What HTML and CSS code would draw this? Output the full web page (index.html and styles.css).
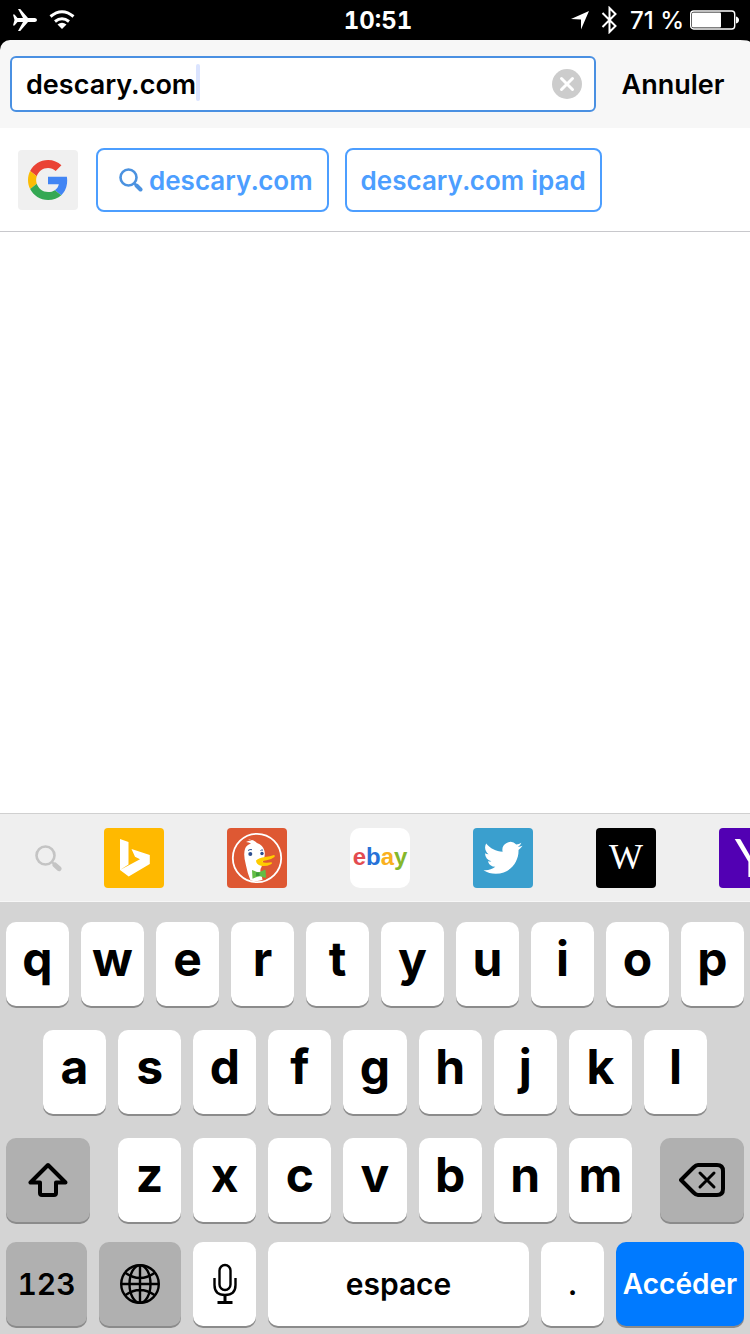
FILE: index.html
```html
<!DOCTYPE html>
<html lang="fr">
<head>
    <meta charset="UTF-8">
    <meta name="viewport" content="width=device-width, initial-scale=1">
    <title>descary.com</title>
    <link rel="stylesheet" href="styles.css">
</head>
<body>
    <div class="status-bar">
        <div class="status-left">
            <svg width="25" height="24" viewBox="0 0 25 24"><path fill="#fff" d="M1 6.500h1.500L5.500 10h5.500L6 1h2.200L16 10h7q2 .500 2 2t-2 2h-7l-7.800 9H6l5-9H5.500l-3 3.500H1L2.500 12z"/></svg>
            <svg width="26" height="20" viewBox="0 0 26 20">
                <path fill="none" stroke="#fff" stroke-width="3" d="M1.500 6.500Q13-3 24.500 6.500M6 11.500q7-5.500 14 0"/>
                <path fill="#fff" d="M8.500 14.500q4.500-3.500 9 0L13 19z"/>
            </svg>
        </div>
        <div class="clock">10:51</div>
        <div class="status-right">
            <svg width="18" height="19" viewBox="0 0 18 19"><path fill="#fff" d="M18 0L10 18.500V8.500L0 8z"/></svg>
            <svg width="17" height="28" viewBox="0 0 17 28"><path fill="none" stroke="#fff" stroke-width="2" d="M1.500 7l13 13L8.500 26V2l6 6-13 13"/></svg>
            <span class="percent">71 %</span>
            <svg width="49" height="20" viewBox="0 0 49 20">
                <rect x="0.700" y="1" width="44" height="18" rx="3" fill="none" stroke="#fff" stroke-width="1.400"/>
                <rect x="2" y="2.500" width="29" height="15" rx="1" fill="#fff"/>
                <path fill="#fff" d="M46 6.500q3 1 3 3.500t-3 3.500z"/>
            </svg>
        </div>
    </div>

    <div class="address-bar">
        <div class="field">
            <input class="address" type="text" value="descary.com" aria-label="Adresse">
            <span class="caret"></span>
            <button class="clear" type="button" aria-label="Effacer">
                <svg width="30" height="30" viewBox="0 0 30 30">
                    <circle cx="15" cy="15" r="15" fill="#ccc"/>
                    <path stroke="#fff" stroke-width="3" stroke-linecap="round" d="M9.500 9.500l11 11M20.500 9.500l-11 11"/>
                </svg>
            </button>
        </div>
        <button class="cancel" type="button">Annuler</button>
    </div>

    <div class="suggestions">
        <svg class="tile google" viewBox="0 0 60 60">
            <g transform="translate(10 10) scale(.834)">
                <path fill="#EA4335" d="M24 9.500c3.540 0 6.710 1.220 9.210 3.600l6.850-6.850C35.900 2.380 30.470 0 24 0 14.620 0 6.510 5.380 2.560 13.220l7.980 6.190C12.430 13.720 17.740 9.500 24 9.500z"/>
                <path fill="#4285F4" d="M46.980 24.550c0-1.570-.15-3.090-.38-4.550H24v9.020h12.940c-.58 2.960-2.260 5.480-4.780 7.180l7.730 6c4.510-4.180 7.090-10.360 7.090-17.650z"/>
                <path fill="#FBBC05" d="M10.530 28.590c-.48-1.450-.76-2.990-.76-4.590s.27-3.140.76-4.590l-7.980-6.190C.92 16.460 0 20.120 0 24c0 3.880.92 7.540 2.560 10.780l7.970-6.190z"/>
                <path fill="#34A853" d="M24 48c6.480 0 11.930-2.130 15.890-5.810l-7.730-6c-2.150 1.450-4.920 2.300-8.160 2.300-6.260 0-11.570-4.220-13.470-9.910l-7.980 6.190C6.510 42.620 14.620 48 24 48z"/>
            </g>
        </svg>
        <button class="chip" type="button">
            <svg class="chip-icon" width="24" height="24" viewBox="0 0 24 24" fill="none" stroke="#4b92e0">
                <circle cx="9.500" cy="9.500" r="8" stroke-width="2.600"/>
                <path stroke-width="2.400" d="M15 15l3 3"/>
                <path stroke-width="4" stroke-linecap="round" d="M17.500 17.500l4 4"/>
            </svg>
            descary.com
        </button>
        <button class="chip" type="button">descary.com ipad</button>
    </div>

    <div class="content"></div>

    <div class="engines">
        <button class="engine-settings" type="button" aria-label="Moteurs de recherche">
            <svg width="27" height="27" viewBox="0 0 27 27" fill="none" stroke="#c4c4c4">
                <circle cx="10.500" cy="10.500" r="9" stroke-width="2.600"/>
                <path stroke-width="2.200" d="M16.500 16.500l3 3"/>
                <path stroke-width="5" stroke-linecap="round" d="M20 20l4 3.700"/>
            </svg>
        </button>
        <button class="engine" type="button" aria-label="Bing">
            <svg class="tile bing" viewBox="0 0 60 60">
                <path fill="#fff" d="M16 11l8.500 3v22.500L16 42zM16 42l20-10.700-5-2.600L27.500 21l18.300 6v9L24.700 48.500z"/>
            </svg>
        </button>
        <button class="engine" type="button" aria-label="DuckDuckGo">
            <svg class="tile duck" viewBox="0 0 60 60">
                <circle cx="30" cy="30" r="24.200" fill="none" stroke="#fff" stroke-width="1.800"/>
                <path fill="#fff" d="M19 14q3-2 6-1.500-2-1-4-.5 5-1 9 3 6 2 7.500 8 1 5-1 8l-2 8q-2 3-.5 6 1 3 1.500 7-6 2-12 .5-3-7-4.500-15-3-11-1-16.500 1-4 6-5.500-2-1.500-5-1.500z"/>
                <circle cx="23.300" cy="26" r="2" fill="#2d4f8e"/>
                <circle cx="35" cy="25.500" r="1.700" fill="#2d4f8e"/>
                <path fill="none" stroke="#2d4f8e" stroke-width="1" d="M21 22.500q2-1.500 4-.8M33.500 22.500q1.500-1 2.500-.3"/>
                <path fill="#fc0" d="M29 32.500q3-3 9-3.500 5-.5 9-2 1.500.7.500 2-3 2.500-8 3.200-3.500.3-4 1.300.5 1.500 4.500 1.300l4.500-.6q1.500.8-.5 2-5 2.600-10 1.600-5-1.500-5-5.300z"/>
                <path fill="#63bd45" d="M25 42l5 2h2.500l6-2.500.5 8.500-6-1.800-2.500.5-5 2z"/>
                <path fill="#3a9b3a" d="M29 44.500h3.500v3.500H29z"/>
            </svg>
        </button>
        <button class="engine" type="button" aria-label="eBay">
            <svg class="tile ebay" viewBox="0 0 60 60">
                <text class="ebay-text" x="30" y="37" text-anchor="middle"><tspan fill="#e34b50">e</tspan><tspan fill="#2672d8">b</tspan><tspan fill="#f9b01e">a</tspan><tspan fill="#85b72b">y</tspan></text>
            </svg>
        </button>
        <button class="engine" type="button" aria-label="Twitter">
            <svg class="tile twitter" viewBox="0 0 60 60">
                <path fill="#fff" transform="translate(10.500 10.400) scale(1.625)" d="M23.953 4.570a10 10 0 01-2.825.775 4.958 4.958 0 002.163-2.723c-.951.555-2.005.959-3.127 1.184a4.920 4.920 0 00-8.384 4.482C7.690 8.095 4.067 6.130 1.640 3.162a4.822 4.822 0 00-.666 2.475c0 1.710.870 3.213 2.188 4.096a4.904 4.904 0 01-2.228-.616v.060a4.923 4.923 0 003.946 4.827 4.996 4.996 0 01-2.212.085 4.936 4.936 0 004.604 3.417 9.867 9.867 0 01-6.102 2.105c-.390 0-.779-.023-1.170-.067a13.995 13.995 0 007.557 2.209c9.053 0 13.998-7.496 13.998-13.985 0-.210 0-.420-.015-.630A9.935 9.935 0 0024 4.590z"/>
            </svg>
        </button>
        <button class="engine" type="button" aria-label="Wikipedia">
            <svg class="tile wiki" viewBox="0 0 60 60"><text class="wiki-text" x="30" y="41" text-anchor="middle">W</text></svg>
        </button>
        <button class="engine" type="button" aria-label="Yahoo">
            <svg class="tile yahoo" viewBox="0 0 60 60"><text class="yahoo-text" x="32" y="49" text-anchor="middle">Y</text></svg>
        </button>
    </div>

    <div class="keyboard">
        <div class="row">
            <button class="key">q</button>
            <button class="key">w</button>
            <button class="key">e</button>
            <button class="key">r</button>
            <button class="key">t</button>
            <button class="key">y</button>
            <button class="key">u</button>
            <button class="key">i</button>
            <button class="key">o</button>
            <button class="key">p</button>
        </div>
        <div class="row row-middle">
            <button class="key">a</button>
            <button class="key">s</button>
            <button class="key">d</button>
            <button class="key">f</button>
            <button class="key">g</button>
            <button class="key">h</button>
            <button class="key">j</button>
            <button class="key">k</button>
            <button class="key">l</button>
        </div>
        <div class="row row-shift">
            <button class="key dark icon-key" aria-label="Majuscule">
                <svg width="40" height="36" viewBox="0 0 40 36"><path fill="none" stroke="#000" stroke-width="4" stroke-linejoin="round" d="M20 3L2.500 20.500H12V31q0 2 2 2h12q2 0 2-2V20.500h9.500z"/></svg>
            </button>
            <div class="letters">
                <button class="key">z</button>
                <button class="key">x</button>
                <button class="key">c</button>
                <button class="key">v</button>
                <button class="key">b</button>
                <button class="key">n</button>
                <button class="key">m</button>
            </div>
            <button class="key dark icon-key" aria-label="Supprimer">
                <svg width="46" height="34" viewBox="0 0 46 34" fill="none" stroke="#000" stroke-linejoin="round">
                    <path stroke-width="4" d="M2 17L14.500 4.500Q17 2 19 2h19q6 0 6 6v18q0 6-6 6H19q-2 0-4.500-2.500z"/>
                    <path stroke-width="3" stroke-linecap="round" d="M21 10l14 14M35 10L21 24"/>
                </svg>
            </button>
        </div>
        <div class="row row-bottom">
            <button class="key small dark">123</button>
            <button class="key small dark" aria-label="Langue">
                <svg width="42" height="42" viewBox="0 0 42 42" fill="none" stroke="#000" stroke-width="2.400">
                    <circle cx="21" cy="21" r="18.800"/>
                    <ellipse cx="21" cy="21" rx="10.500" ry="18.800"/>
                    <path d="M21 2v38M2 21h38M6.500 10q14.500 10 29 0M6.500 32q14.500-10 29 0"/>
                </svg>
            </button>
            <button class="key small" aria-label="Dictée">
                <svg width="24" height="42" viewBox="0 0 24 42" fill="none" stroke="#000">
                    <rect x="6.500" y="2" width="11" height="25" rx="5.500" stroke-width="2.400"/>
                    <path stroke-width="2.400" d="M1.500 15v7q0 10 10.500 10t10.500-10v-7"/>
                    <path stroke-width="3" d="M12 32v7M4.500 39.500h15"/>
                </svg>
            </button>
            <button class="key small">espace</button>
            <button class="key small">.</button>
            <button class="key small go">Accéder</button>
        </div>
    </div>
</body>
</html>
```
FILE: styles.css
```css
* {
    box-sizing: border-box;
}
body {
    margin: 0;
    min-height: 100vh;
    display: flex;
    flex-direction: column;
    background-color: #000;
    color: #000;
    font-family: Inter, "Liberation Sans", sans-serif;
    font-variant-numeric: tabular-nums;
    overflow-x: hidden;
}
svg {
    display: block;
    flex: none;
}
button {
    margin: 0;
    padding: 0;
    border: none;
    background: none;
    color: inherit;
    font-family: inherit;
    font-variant-numeric: inherit;
}
.status-bar {
    display: grid;
    grid-template-columns: 1fr auto 1fr;
    align-items: center;
    height: 40px;
    padding: 0 11px 0 12px;
    color: #fff;
    font-size: 24px;
}
.status-left {
    display: flex;
    align-items: center;
    gap: 12px;
}
.clock {
    padding-left: 5px;
    font-weight: 700;
}
.status-right {
    display: flex;
    align-items: center;
    justify-content: flex-end;
    gap: 12px;
}
.percent {
    font-weight: 500;
    font-variant-numeric: normal;
    margin: 0 -6px 0 0;
}
.address-bar {
    display: flex;
    padding: 16px 0 16px 10px;
    background-color: #f7f7f7;
    border-radius: 10px 10px 0 0 / 10px 2px 0 0;
}
.field {
    position: relative;
    flex: 1;
    display: flex;
    align-items: center;
    height: 56px;
    padding: 0 12px 0 14px;
    border: 2px solid #4a90e2;
    border-radius: 6px;
    background-color: #fff;
}
.address {
    flex: 1;
    min-width: 0;
    padding: 0;
    border: none;
    outline: none;
    background: none;
    font-family: inherit;
    font-size: 27px;
    font-weight: 600;
}
.caret {
    position: absolute;
    left: 184px;
    top: 6px;
    width: 4px;
    height: 37px;
    border-radius: 2px;
    background-color: #dbe4ff;
}
.cancel {
    width: 154px;
    font-size: 27px;
    font-weight: 600;
}
.suggestions {
    display: flex;
    align-items: center;
    gap: 16px;
    padding: 20px 18px 19px;
    background-color: #fff;
    border-bottom: 1px solid #c8c8cc;
}
.tile {
    width: 60px;
    height: 60px;
    border-radius: 4px;
}
.google {
    margin-right: 2px;
    background-color: #f0f0f0;
}
.chip {
    display: flex;
    align-items: center;
    height: 64px;
    padding: 0 14px;
    border: 2px solid #4c9eff;
    border-radius: 8px;
    color: #4c9eff;
    font-size: 26px;
    font-weight: 600;
}
.chip-icon {
    margin: 0 6px 0 7px;
}
.content {
    flex: 1;
    background-color: #fff;
}
.engines {
    display: flex;
    align-items: center;
    gap: 63px;
    padding: 14px 0 13px;
    background-color: #efefef;
    border-top: 1px solid #d0d0d0;
    border-bottom: 1px solid #f7f7f7;
    overflow: hidden;
}
.engine-settings {
    margin: 0 -21px 0 35px;
}
.engine {
    flex: none;
}
.bing {
    background-color: #ffb900;
}
.duck {
    background-color: #de5833;
}
.ebay {
    border-radius: 10px;
    background-color: #fff;
}
.ebay-text {
    font-size: 24px;
    font-weight: 700;
    font-family: "Liberation Sans", sans-serif;
}
.twitter {
    background-color: #3a9fce;
}
.wiki {
    background-color: #000;
}
.wiki-text {
    fill: #fff;
    font-size: 36px;
    font-family: "Liberation Serif", serif;
}
.yahoo {
    background-color: #5200b3;
}
.yahoo-text {
    fill: #fff;
    font-size: 52px;
    font-weight: 400;
    font-family: Lato, sans-serif;
}
.keyboard {
    display: flex;
    flex-direction: column;
    gap: 24px;
    padding: 20px 6px 8px;
    background-color: #d4d4d4;
}
.row {
    display: flex;
    gap: 12px;
}
.row-middle {
    padding: 0 37px;
}
.row-shift {
    gap: 28px;
}
.row-bottom {
    display: grid;
    grid-template-columns: 81fr 82fr 63fr 261fr 63fr 128fr;
    margin-top: -4px;
}
.letters {
    flex: 1;
    display: flex;
    gap: 12px;
}
.key {
    flex: 1;
    display: flex;
    align-items: center;
    justify-content: center;
    min-width: 0;
    height: 84px;
    padding-bottom: 12px;
    border-radius: 10px;
    background-color: #fff;
    box-shadow: 0 2px 0 #8b8b8b;
    font-size: 48px;
    font-weight: 700;
}
.small {
    padding-bottom: 0;
    font-size: 30px;
    font-weight: 600;
}
.dark {
    background-color: #b0b0b0;
}
.icon-key {
    flex: none;
    width: 84px;
    padding-bottom: 0;
}
.go {
    background-color: #007aff;
    color: #fff;
    font-size: 28px;
}
```
